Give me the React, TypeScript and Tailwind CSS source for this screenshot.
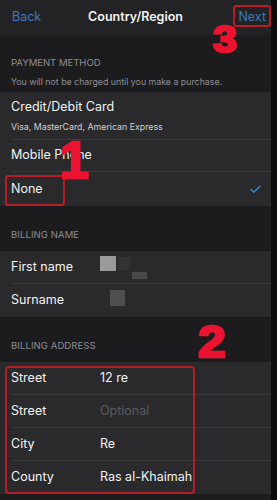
import React from 'react'
import { Check } from 'lucide-react'

const font = { fontFamily: 'Inter, "Noto Sans", sans-serif' }
const digit = { fontFamily: '"Liberation Sans", Arial, sans-serif' }

function Row({ label, value, muted, last }: { label: string; value?: string; muted?: boolean; last?: boolean }) {
  return (
    <div className="pl-[11px]">
      <div className={`flex h-[33px] items-center ${last ? '' : 'border-b border-[#3a3a3c]'}`}>
        <span className="w-[89px] text-[12.5px] text-[#f2f2f2]">{label}</span>
        {value && (
          <span className={`text-[12.5px] ${muted ? 'text-[#5a5a5e]' : 'text-[#f2f2f2]'}`}>{value}</span>
        )}
      </div>
    </div>
  )
}

function Header({ children, h }: { children: React.ReactNode; h: string }) {
  return (
    <div className={`flex ${h} items-end pb-[9px] pl-[11px] text-[9.5px] uppercase tracking-[0.01em] text-[#8e8e93]`}>
      {children}
    </div>
  )
}

export default function App() {
  return (
    <div className="relative flex h-[500px] w-[277px] overflow-hidden bg-[#0b0b0b]" style={font}>
      <div className="flex w-[271px] flex-col bg-[#1c1c1e]">
        {/* nav */}
        <div className="relative flex h-[35px] shrink-0 items-center justify-between bg-[#232325] pl-[12px] pr-[5px]">
          <span className="text-[12.5px] text-[#3a78c2]">Back</span>
          <span className="absolute left-1/2 -translate-x-1/2 text-[12.5px] font-semibold text-[#f2f2f2]">Country/Region</span>
          <span className="text-[12.5px] text-[#3a78c2]">Next</span>
        </div>

        {/* payment method */}
        <div className="flex h-[57px] flex-col justify-end pb-[4px] pl-[11px]">
          <span className="text-[9.5px] uppercase text-[#8e8e93]">Payment Method</span>
          <span className="mt-[5px] text-[8.8px] text-[#8e8e93]">You will not be charged until you make a purchase.</span>
        </div>
        <div className="bg-[#2a2a2c]">
          <div className="pl-[11px]">
            <div className="flex h-[48px] flex-col justify-center border-b border-[#3a3a3c]">
              <span className="text-[12.5px] text-[#f2f2f2]">Credit/Debit Card</span>
              <span className="mt-[4px] text-[8.8px] text-[#d0d0d2]">Visa, MasterCard, American Express</span>
            </div>
          </div>
          <div className="pl-[11px]">
            <div className="flex h-[32px] items-center border-b border-[#3a3a3c]">
              <span className="text-[12.5px] text-[#f2f2f2]">Mobile Phone</span>
            </div>
          </div>
          <div className="pl-[11px]">
            <div className="flex h-[34px] items-center justify-between pr-[9px]">
              <span className="text-[12.5px] text-[#f2f2f2]">None</span>
              <Check size={13} strokeWidth={3} className="text-[#3a7fd0]" />
            </div>
          </div>
        </div>

        {/* billing name */}
        <Header h="h-[45px]">Billing Name</Header>
        <div className="bg-[#2a2a2c]">
          <div className="pl-[11px]">
            <div className="relative flex h-[33px] items-center border-b border-[#3a3a3c]">
              <span className="text-[12.5px] text-[#f2f2f2]">First name</span>
              <span className="absolute left-[89px] top-[5px] h-[15px] w-[16px] bg-[#9a9a9a]" />
              <span className="absolute left-[107px] top-[6px] h-[13px] w-[12px] bg-[#333335]" />
              <span className="absolute left-[121px] top-[21px] h-[7px] w-[15px] bg-[#4a4a4c]" />
            </div>
          </div>
          <div className="pl-[11px]">
            <div className="relative flex h-[33px] items-center">
              <span className="text-[12.5px] text-[#f2f2f2]">Surname</span>
              <span className="absolute left-[99px] top-[6px] h-[16px] w-[15px] bg-[#4e4e50]" />
            </div>
          </div>
        </div>

        {/* billing address */}
        <Header h="h-[45px]">Billing Address</Header>
        <div className="bg-[#2a2a2c]">
          <Row label="Street" value="12 re" />
          <Row label="Street" value="Optional" muted />
          <Row label="City" value="Re" />
          <Row label="County" value="Ras al-Khaimah" last />
        </div>
      </div>

      {/* annotations */}
      <div className="absolute left-[233px] top-[5px] h-[22px] w-[38px] rounded-[3px] border-2 border-[#b81c28]" />
      <div className="absolute left-[5px] top-[175px] h-[31px] w-[60px] rounded-[3px] border-2 border-[#b81c28]" />
      <div className="absolute left-[5px] top-[366px] h-[128px] w-[190px] rounded-[4px] border-2 border-[#b81c28]" />
      <span
        className="absolute left-[213px] top-[21px] text-[37px] font-black leading-none text-[#ec1330] [-webkit-text-stroke:2.5px_#ec1330] scale-x-[1.15] origin-left"
        style={digit}
      >
        3
      </span>
      <span
        className="absolute left-[60px] top-[134px] text-[52px] font-black leading-none text-[#ec1330] [-webkit-text-stroke:2.5px_#ec1330]"
        style={digit}
      >
        1
      </span>
      <span
        className="absolute left-[198px] top-[319px] text-[45px] font-black leading-none text-[#ec1330] [-webkit-text-stroke:2.5px_#ec1330] scale-x-[1.1] origin-left"
        style={digit}
      >
        2
      </span>
    </div>
  )
}
